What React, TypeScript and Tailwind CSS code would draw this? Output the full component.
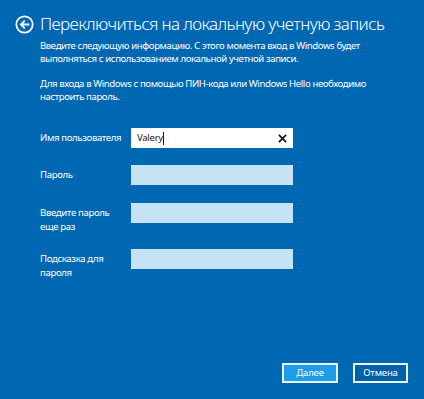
import { useState } from "react";

function BackIcon() {
  return (
    <svg width="19" height="19" viewBox="0 0 20 20" fill="none" className="shrink-0">
      <circle cx="10" cy="10" r="8.6" stroke="white" strokeWidth="1.8" />
      <path d="M14.2 10H6.4M9.6 6.6L6.2 10l3.4 3.4" stroke="white" strokeWidth="1.9" strokeLinecap="square" />
    </svg>
  );
}

function Field({ label, children, className = "" }: { label: React.ReactNode; children: React.ReactNode; className?: string }) {
  return (
    <div className={`flex items-start ${className}`}>
      <div className="w-[91px] pt-[3px] text-[9.6px] tracking-[-0.35px] leading-[14px] text-white whitespace-nowrap">{label}</div>
      {children}
    </div>
  );
}

function EmptyInput() {
  return <div className="h-[20px] w-[162px] bg-[#c6e3f3]" />;
}

export default function App() {
  const [name] = useState("Valery");

  return (
    <div
      className="w-[424px] h-[399px] bg-[#0068b3] flex flex-col text-white overflow-hidden"
      style={{ fontFamily: '"Noto Sans", "Open Sans", sans-serif' }}
    >
      <div className="flex items-center gap-[6px] pt-[12px] pl-[15px] h-[36px]">
        <BackIcon />
        <h1 className="text-[17px] font-light tracking-[-0.6px] leading-[24px] whitespace-nowrap">Переключиться на локальную учетную запись</h1>
      </div>

      <div className="pl-[40px] mt-[3px] text-[9.6px] tracking-[-0.4px] leading-[13px] whitespace-nowrap">
        <p>
          Введите следующую информацию. С этого момента вход в Windows будет
          <br />
          выполняться с использованием локальной учетной записи.
        </p>
        <p className="mt-[12px]">
          Для входа в Windows с помощью ПИН-кода или Windows Hello необходимо
          <br />
          настроить пароль.
        </p>
      </div>

      <div className="pl-[40px] mt-[25px] flex flex-col">
        <Field label="Имя пользователя">
          <div className="h-[20px] w-[162px] bg-white flex items-center pl-[6px] pr-[6px]">
            <span className="text-[9.6px] tracking-[-0.3px] text-[#1a1a1a]">{name}</span>
            <span className="w-px h-[13px] bg-[#1a1a1a]" />
            <svg width="9" height="9" viewBox="0 0 10 10" className="ml-auto">
              <path d="M1 1L9 9M9 1L1 9" stroke="#111" strokeWidth="1.8" />
            </svg>
          </div>
        </Field>
        <Field label="Пароль" className="mt-[17px]">
          <EmptyInput />
        </Field>
        <Field label={<>Введите пароль<br />еще раз</>} className="mt-[18px]">
          <EmptyInput />
        </Field>
        <Field label={<>Подсказка для<br />пароля</>} className="mt-[15px]">
          <EmptyInput />
        </Field>
      </div>

      <div className="mt-auto mb-[16px] mr-[16px] flex justify-end gap-[15px]">
        <button className="w-[56px] h-[20px] bg-[#1d9de9] border-2 border-[#eaf4fb] text-[9.6px] tracking-[-0.2px] leading-none text-white">
          Далее
        </button>
        <button className="w-[55px] h-[20px] bg-[#0060a8] border-2 border-[#eaf4fb] text-[9.6px] tracking-[-0.2px] leading-none text-white">
          Отмена
        </button>
      </div>
    </div>
  );
}
